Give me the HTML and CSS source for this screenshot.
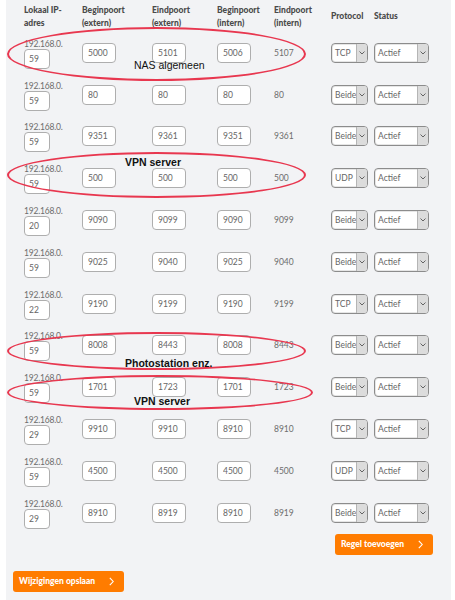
FILE: index.html
```html
<!DOCTYPE html>
<html lang="nl">
<head>
<meta charset="utf-8">
<title>Port forwarding</title>
<link rel="stylesheet" href="styles.css">
</head>
<body>
<div class="page">
  <div class="grid">
    <div class="hd">Lokaal IP-<br>adres</div>
    <div class="hd">Beginpoort<br>(extern)</div>
    <div class="hd">Eindpoort<br>(extern)</div>
    <div class="hd">Beginpoort<br>(intern)</div>
    <div class="hd">Eindpoort<br>(intern)</div>
    <div class="hd">Protocol</div>
    <div class="hd">Status</div>

    <div class="ip"><span>192.168.0.</span><input class="inp small" value="59"></div>
    <div><input class="inp" value="5000"></div><div><input class="inp" value="5101"></div><div><input class="inp" value="5006"></div><div class="txt">5107</div>
    <div class="sel proto"><span class="val">TCP</span><span class="arr"><svg width="6" height="4" viewBox="0 0 6 4"><path d="M0.5 0.5 3 3 5.5 0.5"/></svg></span></div>
    <div class="sel status"><span class="val">Actief</span><span class="arr"><svg width="6" height="4" viewBox="0 0 6 4"><path d="M0.5 0.5 3 3 5.5 0.5"/></svg></span></div>

    <div class="ip"><span>192.168.0.</span><input class="inp small" value="59"></div>
    <div><input class="inp" value="80"></div><div><input class="inp" value="80"></div><div><input class="inp" value="80"></div><div class="txt">80</div>
    <div class="sel proto"><span class="val">Beide</span><span class="arr"><svg width="6" height="4" viewBox="0 0 6 4"><path d="M0.5 0.5 3 3 5.5 0.5"/></svg></span></div>
    <div class="sel status"><span class="val">Actief</span><span class="arr"><svg width="6" height="4" viewBox="0 0 6 4"><path d="M0.5 0.5 3 3 5.5 0.5"/></svg></span></div>

    <div class="ip"><span>192.168.0.</span><input class="inp small" value="59"></div>
    <div><input class="inp" value="9351"></div><div><input class="inp" value="9361"></div><div><input class="inp" value="9351"></div><div class="txt">9361</div>
    <div class="sel proto"><span class="val">Beide</span><span class="arr"><svg width="6" height="4" viewBox="0 0 6 4"><path d="M0.5 0.5 3 3 5.5 0.5"/></svg></span></div>
    <div class="sel status"><span class="val">Actief</span><span class="arr"><svg width="6" height="4" viewBox="0 0 6 4"><path d="M0.5 0.5 3 3 5.5 0.5"/></svg></span></div>

    <div class="ip"><span>192.168.0.</span><input class="inp small" value="59"></div>
    <div><input class="inp" value="500"></div><div><input class="inp" value="500"></div><div><input class="inp" value="500"></div><div class="txt">500</div>
    <div class="sel proto"><span class="val">UDP</span><span class="arr"><svg width="6" height="4" viewBox="0 0 6 4"><path d="M0.5 0.5 3 3 5.5 0.5"/></svg></span></div>
    <div class="sel status"><span class="val">Actief</span><span class="arr"><svg width="6" height="4" viewBox="0 0 6 4"><path d="M0.5 0.5 3 3 5.5 0.5"/></svg></span></div>

    <div class="ip"><span>192.168.0.</span><input class="inp small" value="20"></div>
    <div><input class="inp" value="9090"></div><div><input class="inp" value="9099"></div><div><input class="inp" value="9090"></div><div class="txt">9099</div>
    <div class="sel proto"><span class="val">Beide</span><span class="arr"><svg width="6" height="4" viewBox="0 0 6 4"><path d="M0.5 0.5 3 3 5.5 0.5"/></svg></span></div>
    <div class="sel status"><span class="val">Actief</span><span class="arr"><svg width="6" height="4" viewBox="0 0 6 4"><path d="M0.5 0.5 3 3 5.5 0.5"/></svg></span></div>

    <div class="ip"><span>192.168.0.</span><input class="inp small" value="59"></div>
    <div><input class="inp" value="9025"></div><div><input class="inp" value="9040"></div><div><input class="inp" value="9025"></div><div class="txt">9040</div>
    <div class="sel proto"><span class="val">Beide</span><span class="arr"><svg width="6" height="4" viewBox="0 0 6 4"><path d="M0.5 0.5 3 3 5.5 0.5"/></svg></span></div>
    <div class="sel status"><span class="val">Actief</span><span class="arr"><svg width="6" height="4" viewBox="0 0 6 4"><path d="M0.5 0.5 3 3 5.5 0.5"/></svg></span></div>

    <div class="ip"><span>192.168.0.</span><input class="inp small" value="22"></div>
    <div><input class="inp" value="9190"></div><div><input class="inp" value="9199"></div><div><input class="inp" value="9190"></div><div class="txt">9199</div>
    <div class="sel proto"><span class="val">TCP</span><span class="arr"><svg width="6" height="4" viewBox="0 0 6 4"><path d="M0.5 0.5 3 3 5.5 0.5"/></svg></span></div>
    <div class="sel status"><span class="val">Actief</span><span class="arr"><svg width="6" height="4" viewBox="0 0 6 4"><path d="M0.5 0.5 3 3 5.5 0.5"/></svg></span></div>

    <div class="ip"><span>192.168.0.</span><input class="inp small" value="59"></div>
    <div><input class="inp" value="8008"></div><div><input class="inp" value="8443"></div><div><input class="inp" value="8008"></div><div class="txt">8443</div>
    <div class="sel proto"><span class="val">Beide</span><span class="arr"><svg width="6" height="4" viewBox="0 0 6 4"><path d="M0.5 0.5 3 3 5.5 0.5"/></svg></span></div>
    <div class="sel status"><span class="val">Actief</span><span class="arr"><svg width="6" height="4" viewBox="0 0 6 4"><path d="M0.5 0.5 3 3 5.5 0.5"/></svg></span></div>

    <div class="ip"><span>192.168.0.</span><input class="inp small" value="59"></div>
    <div><input class="inp" value="1701"></div><div><input class="inp" value="1723"></div><div><input class="inp" value="1701"></div><div class="txt">1723</div>
    <div class="sel proto"><span class="val">Beide</span><span class="arr"><svg width="6" height="4" viewBox="0 0 6 4"><path d="M0.5 0.5 3 3 5.5 0.5"/></svg></span></div>
    <div class="sel status"><span class="val">Actief</span><span class="arr"><svg width="6" height="4" viewBox="0 0 6 4"><path d="M0.5 0.5 3 3 5.5 0.5"/></svg></span></div>

    <div class="ip"><span>192.168.0.</span><input class="inp small" value="29"></div>
    <div><input class="inp" value="9910"></div><div><input class="inp" value="9910"></div><div><input class="inp" value="8910"></div><div class="txt">8910</div>
    <div class="sel proto"><span class="val">TCP</span><span class="arr"><svg width="6" height="4" viewBox="0 0 6 4"><path d="M0.5 0.5 3 3 5.5 0.5"/></svg></span></div>
    <div class="sel status"><span class="val">Actief</span><span class="arr"><svg width="6" height="4" viewBox="0 0 6 4"><path d="M0.5 0.5 3 3 5.5 0.5"/></svg></span></div>

    <div class="ip"><span>192.168.0.</span><input class="inp small" value="59"></div>
    <div><input class="inp" value="4500"></div><div><input class="inp" value="4500"></div><div><input class="inp" value="4500"></div><div class="txt">4500</div>
    <div class="sel proto"><span class="val">UDP</span><span class="arr"><svg width="6" height="4" viewBox="0 0 6 4"><path d="M0.5 0.5 3 3 5.5 0.5"/></svg></span></div>
    <div class="sel status"><span class="val">Actief</span><span class="arr"><svg width="6" height="4" viewBox="0 0 6 4"><path d="M0.5 0.5 3 3 5.5 0.5"/></svg></span></div>

    <div class="ip"><span>192.168.0.</span><input class="inp small" value="29"></div>
    <div><input class="inp" value="8910"></div><div><input class="inp" value="8919"></div><div><input class="inp" value="8910"></div><div class="txt">8919</div>
    <div class="sel proto"><span class="val">Beide</span><span class="arr"><svg width="6" height="4" viewBox="0 0 6 4"><path d="M0.5 0.5 3 3 5.5 0.5"/></svg></span></div>
    <div class="sel status"><span class="val">Actief</span><span class="arr"><svg width="6" height="4" viewBox="0 0 6 4"><path d="M0.5 0.5 3 3 5.5 0.5"/></svg></span></div>
  </div>

  <div class="add-row">
    <button class="btn add">Regel toevoegen <svg width="5" height="9" viewBox="0 0 5 9"><path d="M0.8 0.8 4.2 4.5 0.8 8.2"/></svg></button>
  </div>
  <div class="save-row">
    <button class="btn save">Wijzigingen opslaan <svg width="5" height="9" viewBox="0 0 5 9"><path d="M0.8 0.8 4.2 4.5 0.8 8.2"/></svg></button>
  </div>

  <div class="ring r1"></div>
  <div class="ring r2"></div>
  <div class="ring r3"></div>
  <div class="ring r4"></div>
  <span class="note n1">NAS algemeen</span>
  <span class="note n2 bold">VPN server</span>
  <span class="note n3 bold">Photostation enz.</span>
  <span class="note n4 bold">VPN server</span>
</div>
</body>
</html>
```

FILE: styles.css
```css
* { box-sizing: border-box; }
html, body { margin: 0; padding: 0; background: #ffffff; }
body { font-family: Lato, "Open Sans", sans-serif; }

.page {
  position: relative;
  margin-left: 6px;
  width: 445px;
  min-height: 600px;
  background: #f2f3f5;
  padding-bottom: 9px;
}

.grid {
  display: grid;
  grid-template-columns: 58px 70px 65px 57px 57px 43px 60px;
  grid-template-rows: 32px repeat(12, 41.8px);
  align-items: center;
  padding-left: 18px;
}

.hd {
  font-size: 8.5px;
  font-weight: 900;
  line-height: 12.5px;
  color: #4a4a4a;
  padding-top: 1px;
}

.ip {
  display: flex;
  flex-direction: column;
  align-items: flex-start;
  padding-top: 2px;
  font-size: 8.5px;
  line-height: 10px;
  color: #6d6d6d;
  letter-spacing: -0.2px;
}

.inp {
  display: block;
  width: 34px;
  height: 20px;
  margin: 0;
  padding: 0 0 0 5px;
  border: 1px solid #aeaeae;
  border-radius: 4px;
  background: #fff;
  font-family: Lato, "Open Sans", sans-serif;
  font-size: 8.5px;
  color: #666;
  outline: none;
}
.inp.small { width: 26px; height: 20px; padding-left: 4px; }

.txt { font-size: 8.5px; color: #6d6d6d; }

.sel {
  display: flex;
  align-items: stretch;
  height: 20px;
  border: 1px solid #8c8c8c;
  border-radius: 4px;
  background: #fff;
  overflow: hidden;
  box-shadow: inset 0 0 0 1px #e6e6e6;
  font-size: 8.5px;
  color: #666;
}
.sel.proto { width: 37px; }
.sel.status { width: 55px; }
.sel .val {
  flex: 1;
  display: flex;
  align-items: center;
  padding-left: 3px;
  overflow: hidden;
  white-space: nowrap;
}
.sel .arr {
  width: 11px;
  flex: none;
  display: flex;
  align-items: center;
  justify-content: center;
  background: #dcdcdc;
  border-left: 1px solid #b5b5b5;
}
.sel .arr svg { fill: none; stroke: #555; stroke-width: 0.9; }

.add-row {
  display: flex;
  justify-content: flex-end;
  padding-right: 18px;
  margin-top: 0;
}
.save-row {
  margin-top: 16px;
  padding-left: 7px;
}

.btn {
  display: flex;
  align-items: center;
  justify-content: space-between;
  height: 21px;
  padding: 0 10px 0 6px;
  border: none;
  border-radius: 3px;
  background: #ff7c00;
  color: #fff;
  font-family: Lato, "Open Sans", sans-serif;
  font-size: 8.5px;
  font-weight: 900;
}
.btn svg { fill: none; stroke: #fff; stroke-width: 1.1; }
.btn.add { width: 98px; }
.btn.save { width: 111px; }

.ring {
  position: absolute;
  border: 2px solid #e8374f;
  border-radius: 50%;
  pointer-events: none;
}
.r1 { left: 1px; top: 27px; width: 299px; height: 54px; }
.r2 { left: 1px; top: 152px; width: 299px; height: 46px; }
.r3 { left: 1px; top: 332px; width: 299px; height: 38px; }
.r4 { left: 1px; top: 375px; width: 306px; height: 35px; }

.note {
  position: absolute;
  font-family: "Liberation Sans", Arial, sans-serif;
  font-size: 10.5px;
  line-height: 12px;
  color: #111;
  white-space: nowrap;
}
.note.bold { font-weight: 700; }
.n1 { left: 128px; top: 59px; }
.n2 { left: 119px; top: 156px; }
.n3 { left: 119px; top: 357px; }
.n4 { left: 128px; top: 395px; }
```
